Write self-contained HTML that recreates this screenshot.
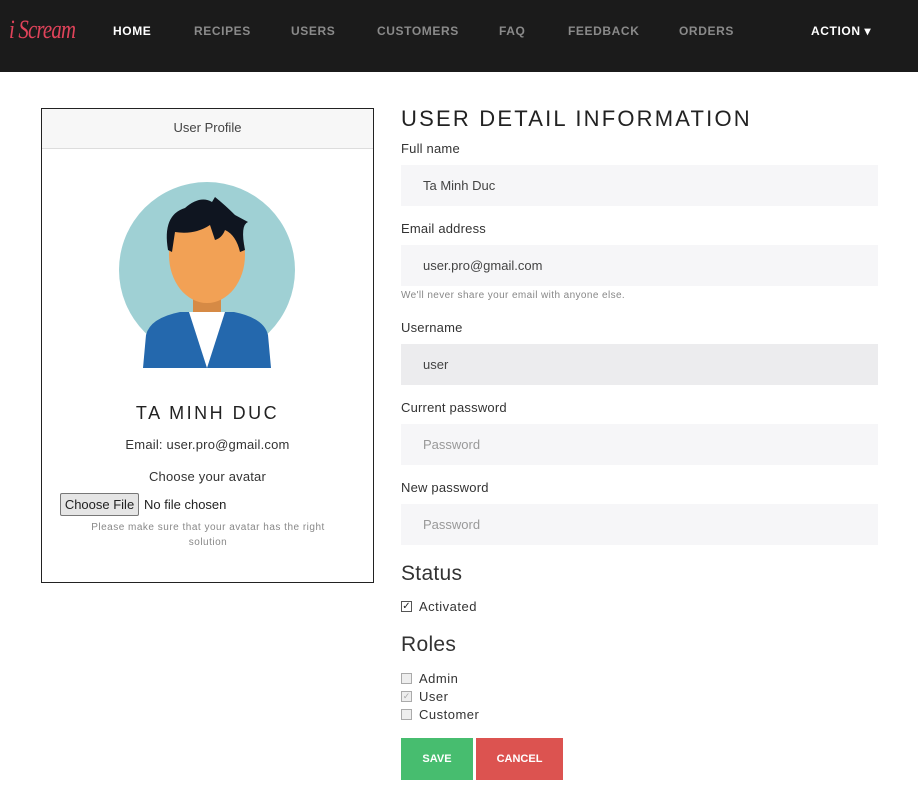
<!DOCTYPE html>
<html><head><meta charset="utf-8"><style>
*{box-sizing:border-box;margin:0;padding:0}
body{width:918px;height:805px;background:#fff;font-family:"Liberation Sans",sans-serif;color:#222;position:relative;overflow:hidden}
.nav{position:absolute;left:0;top:0;width:918px;height:72px;background:#1b1b1b}
.logo{position:absolute;left:9px;top:15px;color:#e0435a;font-family:"Liberation Serif",serif;font-style:italic;font-size:26px;letter-spacing:-1px;transform:scaleX(.8);transform-origin:left}
.ni{position:absolute;top:24px;font-size:12px;font-weight:bold;letter-spacing:.6px;color:#8a8a8a}
.card{position:absolute;left:41px;top:108px;width:333px;height:475px;border:1px solid #222}
.ch{height:40px;background:#f7f7f7;border-bottom:1px solid #ddd;text-align:center;line-height:38px;font-size:13px;color:#444}
.abs{position:absolute}
.lbl{position:absolute;left:401px;font-size:13px;color:#333;letter-spacing:.2px}
.inp{position:absolute;left:401px;width:477px;height:41px;background:#f6f6f8;font-size:13px;color:#444;padding-left:22px;line-height:41px}
.ph{color:#999}
.cb{position:absolute;left:401px;width:11px;height:11px;border:1px solid #aaa;background:#eee}
.ct{position:absolute;left:419px;font-size:13px;color:#333;letter-spacing:.5px}
h2{position:absolute;left:401px;font-weight:normal;font-size:21px;color:#333;letter-spacing:.3px}
</style></head><body>
<div class="nav">
<div class="logo">i Scream</div>
<div class="ni" style="left:113px;color:#fff">HOME</div>
<div class="ni" style="left:194px">RECIPES</div>
<div class="ni" style="left:291px">USERS</div>
<div class="ni" style="left:377px">CUSTOMERS</div>
<div class="ni" style="left:499px">FAQ</div>
<div class="ni" style="left:568px">FEEDBACK</div>
<div class="ni" style="left:679px">ORDERS</div>
<div class="ni" style="left:811px;color:#fff">ACTION ▾</div>
</div>
<div class="card"><div class="ch">User Profile</div></div>
<svg class="abs" style="left:110px;top:180px" width="200" height="190" viewBox="110 180 200 190">
<defs><clipPath id="c"><rect x="110" y="180" width="200" height="188"/></clipPath></defs>
<g clip-path="url(#c)">
<circle cx="207" cy="270" r="88" fill="#9fd0d4"/>
<rect x="193" y="290" width="28" height="30" fill="#d68a45"/>
<path d="M143 368 L146 335 Q150 318 180 312 L234 312 Q264 318 268 335 L271 368Z" fill="#2468ad"/>
<path d="M189 312 L207 368 L225 312Z" fill="#fff"/>
<ellipse cx="207" cy="255" rx="38" ry="48" fill="#f2a155"/>
<path d="M168 250 Q162 215 185 208 Q200 195 212 202 L215 197 Q225 205 235 215 L248 222 Q240 225 245 250 L240 252 Q236 235 225 230 Q222 238 215 240 L210 225 Q195 235 175 232 L172 252Z" fill="#0f1520"/>
</g></svg>
<div class="abs" style="left:41px;width:333px;top:403px;text-align:center;font-size:18px;letter-spacing:2.5px;color:#222">TA MINH DUC</div>
<div class="abs" style="left:41px;width:333px;top:437px;text-align:center;font-size:13px;color:#333;letter-spacing:.2px">Email: user.pro@gmail.com</div>
<div class="abs" style="left:41px;width:333px;top:469px;text-align:center;font-size:13px;color:#333;letter-spacing:.2px">Choose your avatar</div>
<div class="abs" style="left:60px;top:493px;width:79px;height:23px;border:1px solid #777;background:#e5e5e5;font-size:13px;line-height:21px;text-align:center;border-radius:2px">Choose File</div>
<div class="abs" style="left:144px;top:497px;font-size:13px">No file chosen</div>
<div class="abs" style="left:78px;width:260px;top:520px;text-align:center;font-size:10px;color:#888;letter-spacing:.5px;line-height:15px">Please make sure that your avatar has the right solution</div>

<div class="abs" style="left:401px;top:106px;font-size:22px;letter-spacing:2.2px;color:#222">USER DETAIL INFORMATION</div>
<div class="lbl" style="top:141px">Full name</div>
<div class="inp" style="top:165px">Ta Minh Duc</div>
<div class="lbl" style="top:221px">Email address</div>
<div class="inp" style="top:245px">user.pro@gmail.com</div>
<div class="abs" style="left:401px;top:290px;font-size:10px;color:#888;letter-spacing:.4px">We'll never share your email with anyone else.</div>
<div class="lbl" style="top:320px">Username</div>
<div class="inp" style="top:344px;background:#ececee">user</div>
<div class="lbl" style="top:400px">Current password</div>
<div class="inp ph" style="top:424px">Password</div>
<div class="lbl" style="top:480px">New password</div>
<div class="inp ph" style="top:504px">Password</div>
<h2 style="top:562px">Status</h2>
<div class="cb" style="top:601px;background:#fff;border-color:#555;font-size:10px;line-height:9px;text-align:center">✓</div>
<div class="ct" style="top:599px">Activated</div>
<h2 style="top:633px">Roles</h2>
<div class="cb" style="top:673px"></div><div class="ct" style="top:671px">Admin</div>
<div class="cb" style="top:691px;color:#aaa;font-size:9px;line-height:9px;text-align:center">✓</div><div class="ct" style="top:689px">User</div>
<div class="cb" style="top:709px"></div><div class="ct" style="top:707px">Customer</div>
<div class="abs" style="left:401px;top:738px;width:72px;height:42px;background:#47bd6f;color:#fff;font-size:11px;font-weight:bold;text-align:center;line-height:42px">SAVE</div>
<div class="abs" style="left:476px;top:738px;width:87px;height:42px;background:#dc5350;color:#fff;font-size:11px;font-weight:bold;text-align:center;line-height:42px">CANCEL</div>
</body></html>
